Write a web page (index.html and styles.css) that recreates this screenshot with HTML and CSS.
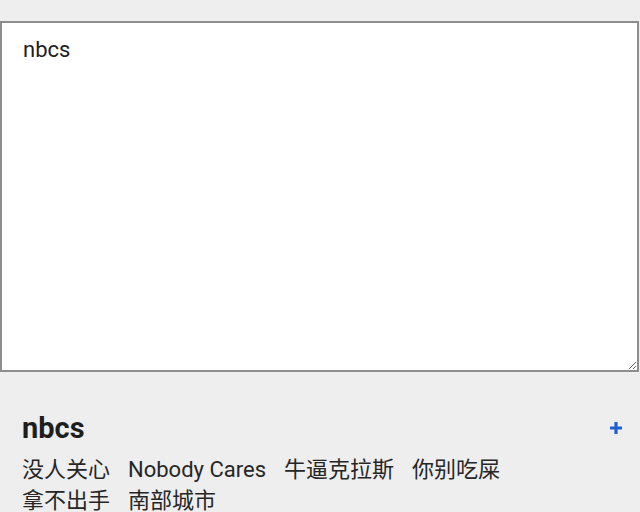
FILE: index.html
```html
<!DOCTYPE html>
<html lang="zh">
<head>
<meta charset="utf-8">
<link rel="stylesheet" href="styles.css">
</head>
<body>
<textarea class="editor">nbcs</textarea>
<section class="panel">
  <div class="panel-head">
    <h2 class="title">nbcs</h2>
    <svg class="add" width="14" height="14" viewBox="0 0 14 14"><path d="M7 1v12M1 7h12" stroke="#1d5fcc" stroke-width="3.2" stroke-linecap="butt"/></svg>
  </div>
  <div class="tags">
    <span class="tag">没人关心</span>
    <span class="tag">Nobody Cares</span>
    <span class="tag">牛逼克拉斯</span>
    <span class="tag">你别吃屎</span>
    <span class="tag">拿不出手</span>
    <span class="tag">南部城市</span>
  </div>
</section>
</body>
</html>
```
FILE: styles.css
```css
html, body {
  margin: 0;
  padding: 0;
  background: #eeeeee;
  font-family: Roboto, "Noto Sans CJK SC", sans-serif;
  color: #222222;
  overflow: hidden;
}
.editor {
  display: block;
  box-sizing: border-box;
  width: 639px;
  height: 351px;
  margin: 21px 0 0 0;
  padding: 14px 21px;
  border: 2px solid #8d8d8d;
  border-radius: 0;
  background: #ffffff;
  font-family: Roboto, "Noto Sans CJK SC", sans-serif;
  font-size: 22px;
  line-height: 26px;
  color: #1e1e1e;
  outline: none;
}
.panel {
  padding: 39px 17px 0 22px;
}
.panel-head {
  display: flex;
  align-items: center;
  justify-content: space-between;
  height: 34px;
}
.title {
  margin: 0;
  font-size: 29px;
  line-height: 34px;
  font-weight: 700;
  color: #1e1e1e;
}
.add {
  display: block;
}
.tags {
  display: flex;
  flex-wrap: wrap;
  column-gap: 18px;
  max-width: 560px;
  margin-top: 9px;
  font-size: 22px;
  line-height: 31px;
  color: #262626;
}
.tag {
  white-space: nowrap;
}
```
